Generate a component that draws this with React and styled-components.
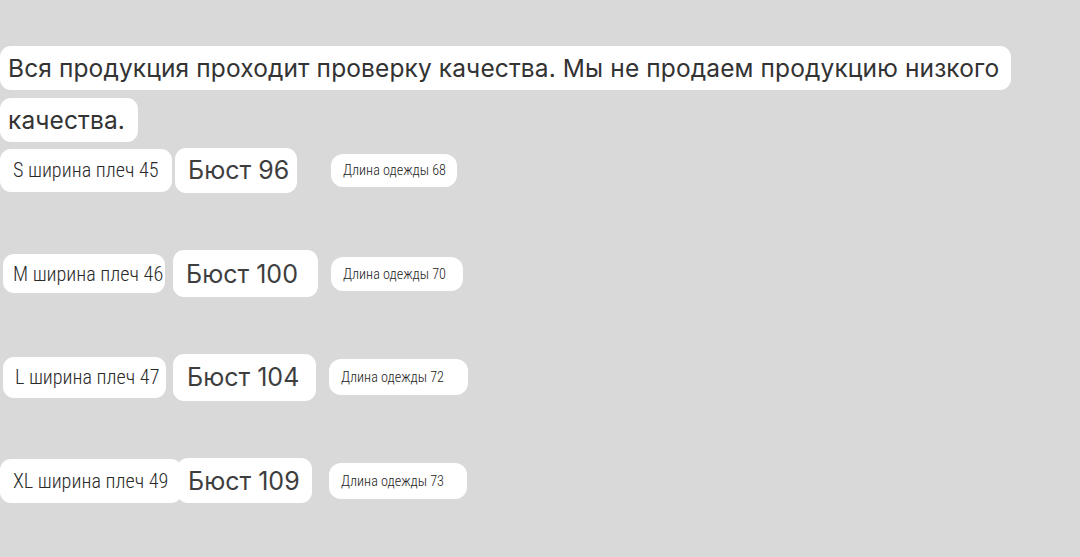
import React from "react";
import styled, { createGlobalStyle } from "styled-components";

const GlobalStyle = createGlobalStyle`
  * { box-sizing: border-box; }
  html, body { margin: 0; background: #d9d9d9; }
  body { color: #333; font-family: Inter, "Noto Sans", sans-serif; }
`;

const Page = styled.main`
  display: flex;
  flex-direction: column;
  padding-top: 46px;
  width: 1080px;
  height: 557px;
  overflow: hidden;
`;

const Notice = styled.section`
  display: flex;
  flex-direction: column;
  align-items: flex-start;
  gap: 8px;
`;

const NoticeLine = styled.p`
  margin: 0;
  height: 44px;
  display: flex;
  align-items: center;
  padding: 0 ${(p) => p.$pr}px 0 8px;
  background: #fff;
  border-radius: 11px;
  font-family: Inter, "Noto Sans", sans-serif;
  font-size: 24.5px;
  letter-spacing: 0.12px;
  color: #333;
  white-space: nowrap;
`;

const SizeTable = styled.section`
  display: flex;
  flex-direction: column;
  gap: 55.5px;
  margin-top: 4px;
`;

const SizeRow = styled.div`
  display: grid;
  grid-template-columns: 174px 156px auto;
  align-items: center;
  height: 48px;
`;

const Chip = styled.div`
  display: flex;
  align-items: center;
  width: ${(p) => p.$w}px;
  height: ${(p) => p.$h}px;
  margin-left: ${(p) => p.$ml}px;
  padding-left: ${(p) => p.$pl}px;
  background: #fff;
  white-space: nowrap;
  position: relative;
`;

const ShoulderChip = styled(Chip)`
  border-radius: 11px;
  font-family: Roboto, sans-serif;
  font-stretch: condensed;
  font-weight: 350;
  font-size: 20.2px;
  color: #2a2a2a;
`;

const BustChip = styled(Chip)`
  border-radius: 11px;
  font-family: Inter, "Noto Sans", sans-serif;
  font-size: 25px;
  color: #3e3e3e;
  z-index: 1;
`;

const LengthChip = styled(Chip)`
  border-radius: 12px;
  font-family: Roboto, sans-serif;
  font-stretch: condensed;
  font-weight: 350;
  font-size: 14.2px;
  color: #222;
`;

const sizes = [
  {
    size: "S", shoulder: 45, bust: 96, length: 68,
    a: { ml: 0, w: 172, h: 43, pl: 13 },
    b: { ml: 1, w: 122, h: 45, pl: 13 },
    c: { ml: 1, w: 126, h: 33, pl: 12 },
  },
  {
    size: "M", shoulder: 46, bust: 100, length: 70,
    a: { ml: 3, w: 162, h: 39, pl: 10 },
    b: { ml: -1, w: 145, h: 47, pl: 13 },
    c: { ml: 1, w: 132, h: 34, pl: 12 },
  },
  {
    size: "L", shoulder: 47, bust: 104, length: 72,
    a: { ml: 3, w: 163, h: 41, pl: 12 },
    b: { ml: -1, w: 143, h: 47, pl: 14 },
    c: { ml: -1, w: 139, h: 36, pl: 12 },
  },
  {
    size: "XL", shoulder: 49, bust: 109, length: 73,
    a: { ml: 0, w: 182, h: 44, pl: 13 },
    b: { ml: 3, w: 135, h: 45, pl: 11 },
    c: { ml: -1, w: 138, h: 36, pl: 12 },
  },
];

export default function App() {
  return (
    <>
      <GlobalStyle />
      <Page>
        <Notice>
          <NoticeLine $pr={12}>
            Вся продукция проходит проверку качества. Мы не продаем продукцию низкого
          </NoticeLine>
          <NoticeLine $pr={13}>качества.</NoticeLine>
        </Notice>
        <SizeTable>
          {sizes.map((s) => (
            <SizeRow key={s.size}>
              <ShoulderChip $ml={s.a.ml} $w={s.a.w} $h={s.a.h} $pl={s.a.pl}>
                {s.size} ширина плеч {s.shoulder}
              </ShoulderChip>
              <BustChip $ml={s.b.ml} $w={s.b.w} $h={s.b.h} $pl={s.b.pl}>
                Бюст {s.bust}
              </BustChip>
              <LengthChip $ml={s.c.ml} $w={s.c.w} $h={s.c.h} $pl={s.c.pl}>
                Длина одежды {s.length}
              </LengthChip>
            </SizeRow>
          ))}
        </SizeTable>
      </Page>
    </>
  );
}
